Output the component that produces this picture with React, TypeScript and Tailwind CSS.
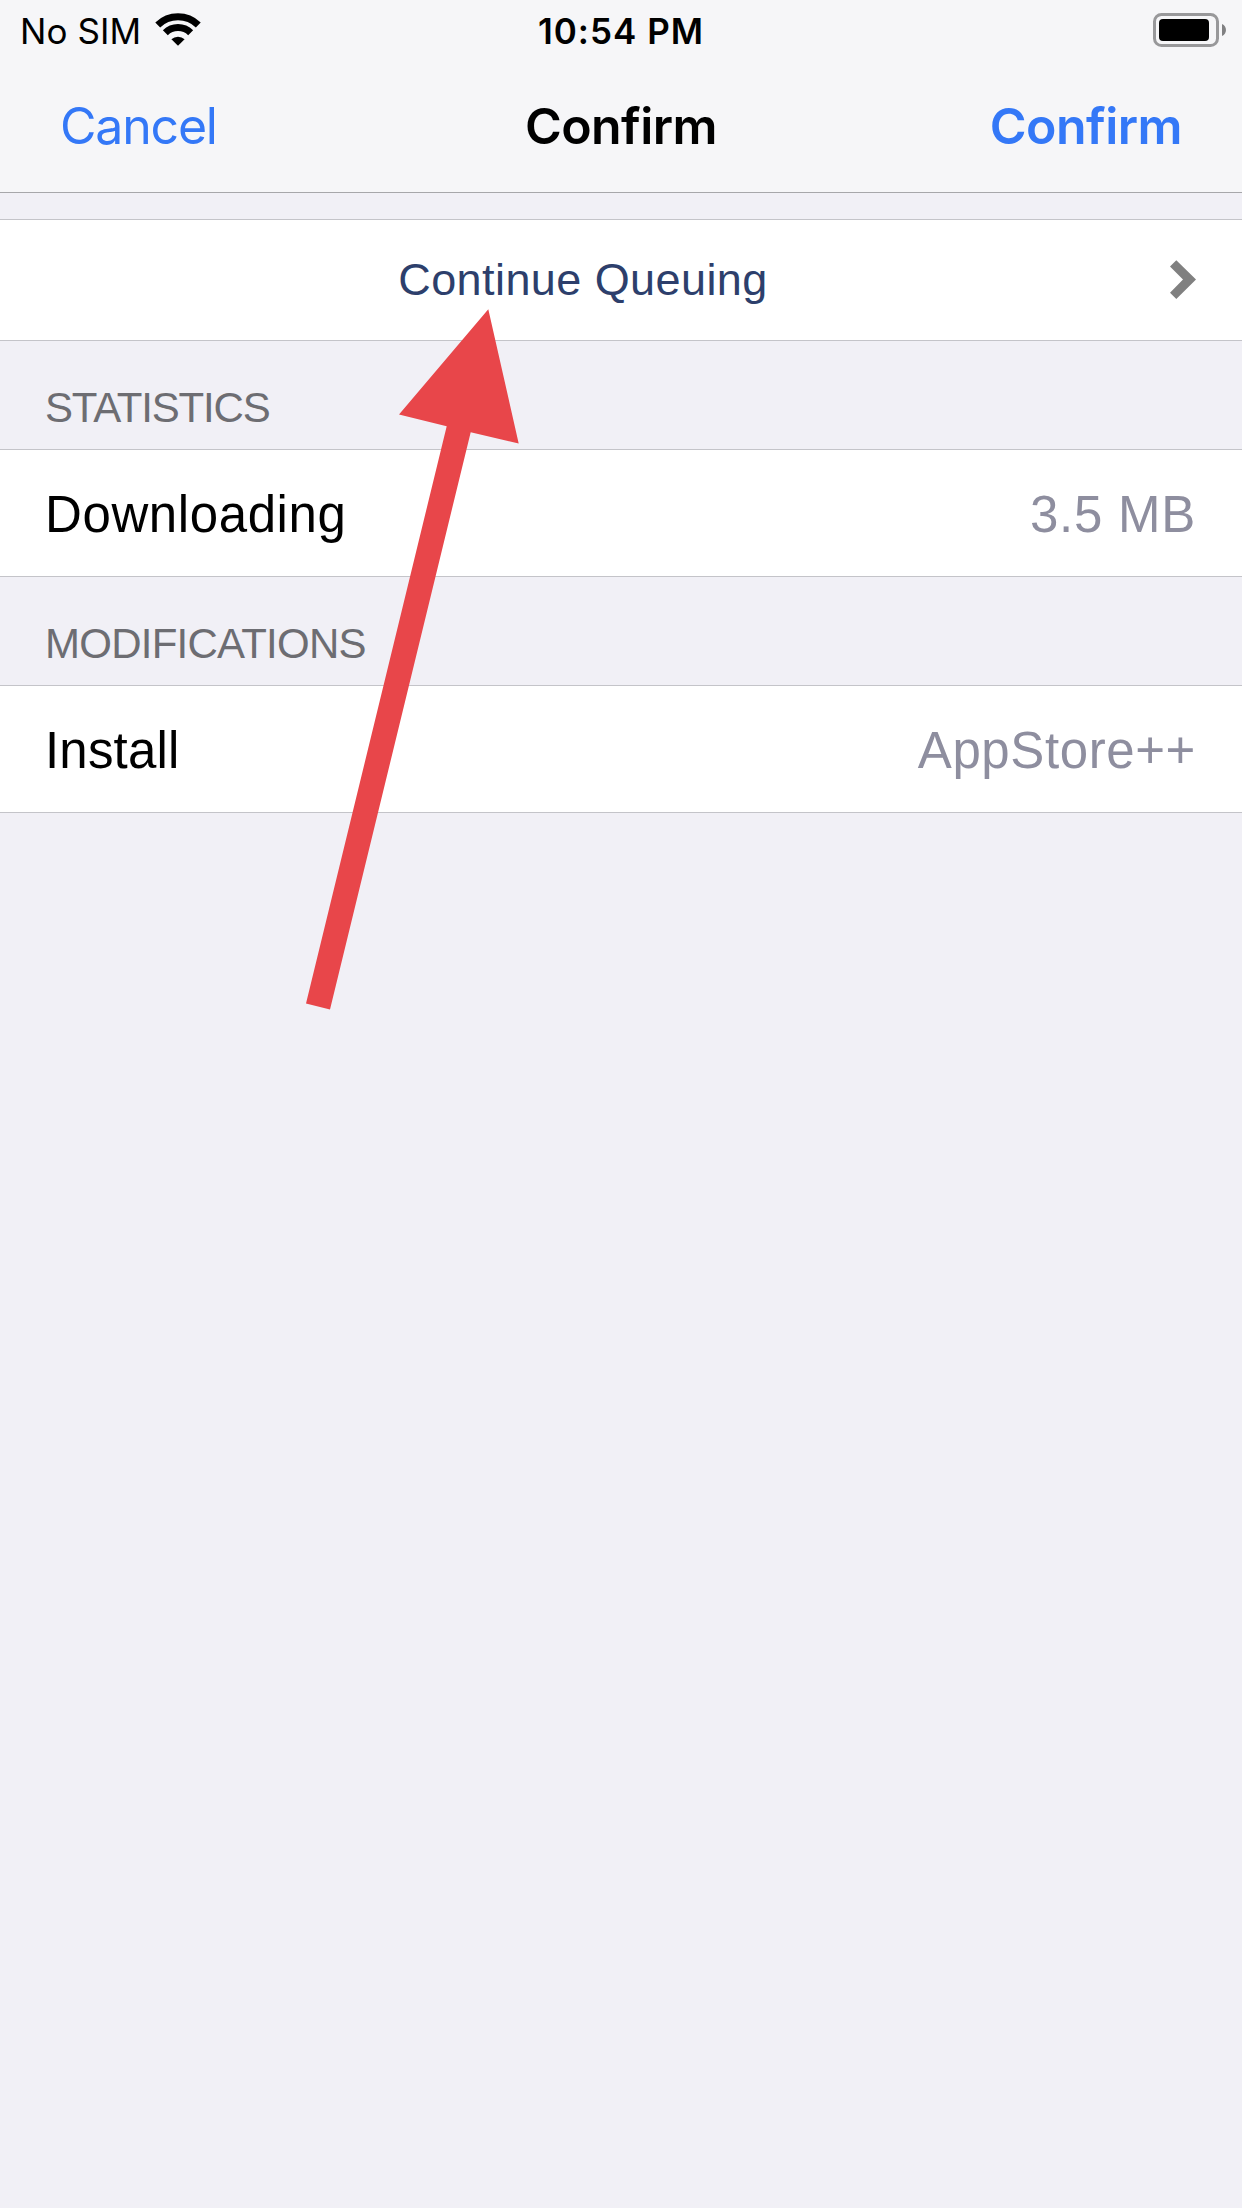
import type { ReactNode } from 'react';

function WifiIcon() {
  return (
    <svg className="block h-[35px] w-[48px]" viewBox="0 0 48 35" fill="none">
      <path d="M3.72 13.99 A29.2 29.2 0 0 1 44.28 13.99" stroke="#000" strokeWidth="7" />
      <path d="M11.34 21.76 A17.9 17.9 0 0 1 36.66 21.76" stroke="#000" strokeWidth="7" />
      <path d="M24 34.8 L17.4 28.3 A9.6 9.6 0 0 1 30.6 28.3 Z" fill="#000" />
    </svg>
  );
}

function BatteryIcon() {
  return (
    <svg className="block h-[34px] w-[73px]" viewBox="0 0 73 34">
      <rect x="1.5" y="1.5" width="63" height="31" rx="7" fill="none" stroke="#98989a" strokeWidth="3" />
      <rect x="6" y="6" width="50" height="22" rx="4" fill="#000" />
      <path d="M69 11 C74.3 13 74.3 21 69 23 Z" fill="#808082" />
    </svg>
  );
}

function ChevronIcon() {
  return (
    <svg className="block h-[40px] w-[26px]" viewBox="0 0 26 40">
      <path d="M6.3 0.3 L26 19.6 L6.3 39 L0 32.7 L13 19.6 L0 6.4 Z" fill="#808080" />
    </svg>
  );
}

function StatusBar() {
  return (
    <div className="grid h-[60px] grid-cols-[1fr_auto_1fr] items-start text-[35px] leading-[42px] text-black">
      <div className="flex pl-[20px]">
        <span className="mt-[10px] tracking-[0.1px]">No SIM</span>
        <span className="mt-[11px] ml-[13px]">
          <WifiIcon />
        </span>
      </div>
      <span className="mt-[10px] font-semibold tracking-[1px]">10:54 PM</span>
      <div className="mt-[13px] flex justify-end pr-[16px]">
        <BatteryIcon />
      </div>
    </div>
  );
}

function NavBar() {
  return (
    <nav className="grid h-[133px] grid-cols-[1fr_auto_1fr] items-center border-b border-[#a7a7aa] text-[50px] leading-[60px]">
      <button className="pl-[60px] text-left tracking-[-1.2px] text-[#3478f7]">Cancel</button>
      <h1 className="font-semibold tracking-[-0.55px] text-black">Confirm</h1>
      <button className="pr-[60px] text-right font-semibold tracking-[-0.55px] text-[#3478f7]">Confirm</button>
    </nav>
  );
}

function SectionTitle({ children }: { children: ReactNode }) {
  return (
    <h2 className="h-[108px] pt-[43px] pl-[45px] text-[42px] leading-[47px] text-[#6d6d72]">{children}</h2>
  );
}

function Row({ label, value }: { label: ReactNode; value: ReactNode }) {
  return (
    <div className="flex h-[128px] justify-between border-y border-[#c4c4c9] bg-white pt-[36px] pr-[46px] pl-[45px] text-[51px] leading-[57px] text-black">
      <span>{label}</span>
      <span className="text-[#8e8e9f]">{value}</span>
    </div>
  );
}

export default function App() {
  return (
    <div className="relative h-[2208px] w-[1242px] overflow-hidden bg-[#f1f0f6]">
      <header className="bg-[#f6f6f8] font-[Inter,sans-serif]">
        <StatusBar />
        <NavBar />
      </header>

      <main className="pt-[26px] font-['Liberation_Sans',Arial,sans-serif]">
        <div className="flex h-[122px] border-y border-[#c4c4c9] bg-white pr-[46px]">
          <span className="flex-1 pt-[34px] pr-[4px] text-center text-[45px] leading-[51px] tracking-[0.42px] text-[#2d3f6c]">
            Continue Queuing
          </span>
          <span className="mt-[40px]">
            <ChevronIcon />
          </span>
        </div>

        <SectionTitle>
          <span className="tracking-[-1.2px]">STATISTICS</span>
        </SectionTitle>
        <Row
          label={<span className="tracking-[0.6px]">Downloading</span>}
          value={<span className="tracking-[0.75px]">3.5 MB</span>}
        />

        <SectionTitle>
          <span className="tracking-[-0.75px]">MODIFICATIONS</span>
        </SectionTitle>
        <Row
          label={<span className="tracking-[0.18px]">Install</span>}
          value={<span className="tracking-[0.6px]">AppStore++</span>}
        />
      </main>

      <svg className="pointer-events-none absolute top-[309px] left-[306px] h-[701px] w-[213px]" viewBox="306 309 213 701">
        <path d="M488.3 309.3 L518.7 443.5 L470.7 432.2 L330 1009.5 L306 1003.6 L446.7 426.2 L399 414.4 Z" fill="#e8464a" />
      </svg>
    </div>
  );
}
